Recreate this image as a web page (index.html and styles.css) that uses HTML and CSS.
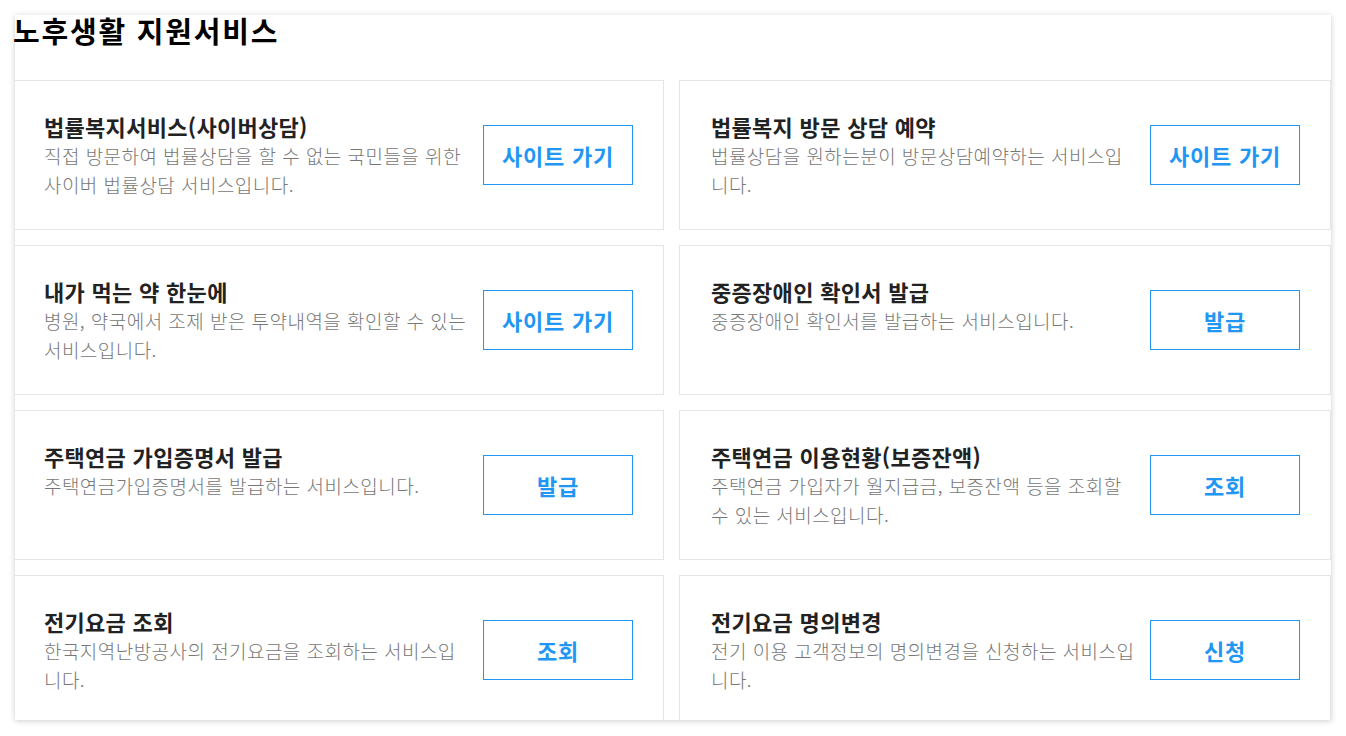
FILE: index.html
```html
<!DOCTYPE html>
<html lang="ko">
<head>
<meta charset="utf-8">
<title>노후생활 지원서비스</title>
<link rel="stylesheet" href="styles.css">
</head>
<body>
<section class="panel">
  <h2 class="panel-title">노후생활 지원서비스</h2>
  <div class="grid-clip">
    <div class="grid">
      <div class="card">
        <div class="card-text">
          <h3 class="card-title">법률복지서비스(사이버상담)</h3>
          <p class="card-desc">직접 방문하여 법률상담을 할 수 없는 국민들을 위한 사이버 법률상담 서비스입니다.</p>
        </div>
        <a class="card-btn" href="#">사이트 가기</a>
      </div>
      <div class="card">
        <div class="card-text">
          <h3 class="card-title">법률복지 방문 상담 예약</h3>
          <p class="card-desc">법률상담을 원하는분이 방문상담예약하는 서비스입니다.</p>
        </div>
        <a class="card-btn" href="#">사이트 가기</a>
      </div>
      <div class="card">
        <div class="card-text">
          <h3 class="card-title">내가 먹는 약 한눈에</h3>
          <p class="card-desc">병원, 약국에서 조제 받은 투약내역을 확인할 수 있는 서비스입니다.</p>
        </div>
        <a class="card-btn" href="#">사이트 가기</a>
      </div>
      <div class="card">
        <div class="card-text">
          <h3 class="card-title">중증장애인 확인서 발급</h3>
          <p class="card-desc">중증장애인 확인서를 발급하는 서비스입니다.</p>
        </div>
        <a class="card-btn" href="#">발급</a>
      </div>
      <div class="card">
        <div class="card-text">
          <h3 class="card-title">주택연금 가입증명서 발급</h3>
          <p class="card-desc">주택연금가입증명서를 발급하는 서비스입니다.</p>
        </div>
        <a class="card-btn" href="#">발급</a>
      </div>
      <div class="card">
        <div class="card-text">
          <h3 class="card-title">주택연금 이용현황(보증잔액)</h3>
          <p class="card-desc">주택연금 가입자가 월지급금, 보증잔액 등을 조회할 수 있는 서비스입니다.</p>
        </div>
        <a class="card-btn" href="#">조회</a>
      </div>
      <div class="card">
        <div class="card-text">
          <h3 class="card-title">전기요금 조회</h3>
          <p class="card-desc">한국지역난방공사의 전기요금을 조회하는 서비스입니다.</p>
        </div>
        <a class="card-btn" href="#">조회</a>
      </div>
      <div class="card">
        <div class="card-text">
          <h3 class="card-title">전기요금 명의변경</h3>
          <p class="card-desc">전기 이용 고객정보의 명의변경을 신청하는 서비스입니다.</p>
        </div>
        <a class="card-btn" href="#">신청</a>
      </div>
    </div>
  </div>
</section>
</body>
</html>
```
FILE: styles.css
```css
html, body {
  margin: 0;
  padding: 0;
  background: #ffffff;
}
body {
  font-family: "Noto Sans CJK KR", "Noto Sans", sans-serif;
  padding: 15px;
}
.panel {
  width: 1316px;
  height: 705px;
  background: #fff;
  box-shadow: 0 1px 6px rgba(0, 0, 0, 0.2);
}
.panel-title {
  margin: 0 0 35px -2px;
  font-size: 29px;
  line-height: 30px;
  font-weight: 700;
  color: #000;
  letter-spacing: 1.8px;
}
.grid-clip {
  height: 640px;
  overflow: hidden;
}
.grid {
  display: grid;
  width: 1319px;
  margin-left: -3px;
  grid-template-columns: 1fr 1fr;
  grid-auto-rows: 150px;
  column-gap: 15px;
  row-gap: 15px;
}
.card {
  box-sizing: border-box;
  border: 1px solid #e5e5e5;
  display: flex;
  align-items: center;
  padding: 30px 30px 30px 31px;
}
.card-text {
  align-self: flex-start;
  flex: 1;
  margin-right: 11px;
}
.card-title {
  margin: 0;
  font-size: 22px;
  line-height: 30px;
  font-weight: 700;
  color: #222;
  letter-spacing: 0.3px;
}
.card-desc {
  margin: 0;
  font-size: 19px;
  line-height: 29px;
  font-weight: 300;
  color: #777;
  letter-spacing: 0.45px;
}
.card-btn {
  flex: none;
  box-sizing: border-box;
  width: 150px;
  height: 60px;
  border: 1px solid #2196f3;
  display: flex;
  align-items: center;
  justify-content: center;
  color: #2196f3;
  font-size: 22px;
  font-weight: 700;
  text-decoration: none;
  letter-spacing: 0.8px;
}
```
